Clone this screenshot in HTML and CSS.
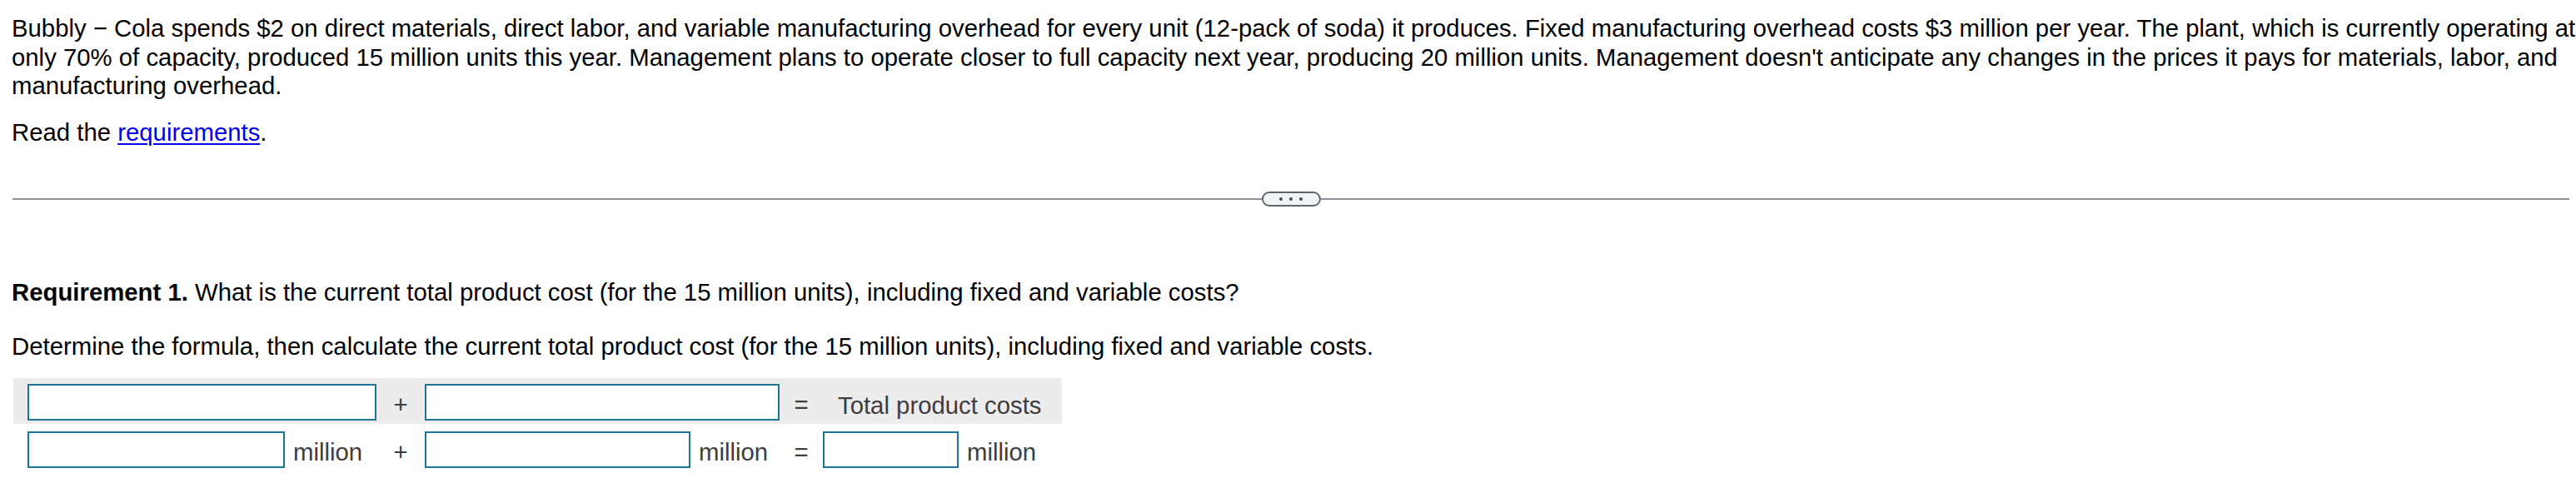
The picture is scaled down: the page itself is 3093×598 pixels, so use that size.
FILE: index.html
```html
<!DOCTYPE html>
<html lang="en">
<head>
<meta charset="utf-8">
<title>Requirement 1</title>
<link rel="stylesheet" href="styles.css">
</head>
<body>
<div class="page">
  <p class="intro">Bubbly − Cola spends $2 on direct materials, direct labor, and variable manufacturing overhead for every unit (12-pack of soda) it produces. Fixed manufacturing overhead costs $3 million per year. The plant, which is currently operating at only 70% of capacity, produced 15 million units this year. Management plans to operate closer to full capacity next year, producing 20 million units. Management doesn't anticipate any changes in the prices it pays for materials, labor, and manufacturing overhead.</p>
  <p class="read">Read the <a href="#" class="link">requirements</a>.</p>
  <div class="divider">
    <span class="rule"></span>
    <span class="pill"><i class="dot"></i><i class="dot"></i><i class="dot"></i></span>
    <span class="rule"></span>
  </div>
  <p class="req"><b>Requirement 1.</b> What is the current total product cost (for the 15 million units), including fixed and variable costs?</p>
  <p class="det">Determine the formula, then calculate the current total product cost (for the 15 million units), including fixed and variable costs.</p>
  <div class="formula">
    <div class="frow band">
      <div class="cell first"><span class="box w419"></span></div>
      <div class="cell op">+</div>
      <div class="cell"><span class="box w426"></span></div>
      <div class="cell op">=</div>
      <div class="cell label">Total product costs</div>
    </div>
    <div class="frow second">
      <div class="cell first"><span class="box w309"></span><span class="unit">million</span></div>
      <div class="cell op">+</div>
      <div class="cell"><span class="box w319"></span><span class="unit">million</span></div>
      <div class="cell op">=</div>
      <div class="cell"><span class="box w163"></span><span class="unit">million</span></div>
    </div>
  </div>
</div>
</body>
</html>
```
FILE: styles.css
```css
html, body {
  margin: 0;
  padding: 0;
  background: #ffffff;
}
body {
  font-family: "Liberation Sans", Arial, sans-serif;
  font-size: 29.33px;
  color: #000;
}
.page {
  padding: 17px 0 0 14px;
}
p {
  margin: 0;
}
.intro {
  line-height: 34.5px;
}
.read {
  margin-top: 21px;
  line-height: 34px;
}
.link {
  color: #0000ee;
  text-decoration: underline;
  text-decoration-thickness: 2px;
  text-underline-offset: 3px;
}
.divider {
  display: flex;
  align-items: center;
  margin: 54px 0 0 -14px;
  padding: 0 8px 0 15px;
}
.rule {
  flex: 1;
  height: 2px;
  background: #8e9095;
}
.pill {
  width: 67px;
  height: 14px;
  border: 2px solid #5f6670;
  border-radius: 10px;
  background: #f3f4f6;
  display: flex;
  align-items: center;
  justify-content: center;
  gap: 8px;
}
.dot {
  width: 4px;
  height: 4px;
  border-radius: 50%;
  background: #4a4a4a;
}
.req {
  margin-top: 86px;
  line-height: 34px;
}
.det {
  margin-top: 31px;
  line-height: 34px;
}
.formula {
  margin-top: 21px;
  margin-left: 2px;
  width: 1259px;
  color: #3d3d3d;
}
.frow {
  display: grid;
  grid-template-columns: 436px 58px 426px 52px 287px;
  align-items: center;
}
.band {
  background: #ececec;
  height: 55px;
  padding-top: 3px;
  box-sizing: border-box;
}
.second {
  padding-top: 9px;
}
.cell {
  display: flex;
  align-items: center;
}
.first {
  padding-left: 17px;
}
.op {
  justify-content: center;
  padding-top: 6px;
}
.label {
  padding-left: 18px;
  padding-top: 8px;
}
.box {
  display: block;
  height: 40px;
  border: 2px solid #1d7494;
  background: #fff;
}
.w419 { width: 415px; }
.w426 { width: 422px; }
.w309 { width: 305px; }
.w319 { width: 315px; }
.w163 { width: 159px; }
.unit {
  margin-left: 10px;
  padding-top: 6px;
}
```
